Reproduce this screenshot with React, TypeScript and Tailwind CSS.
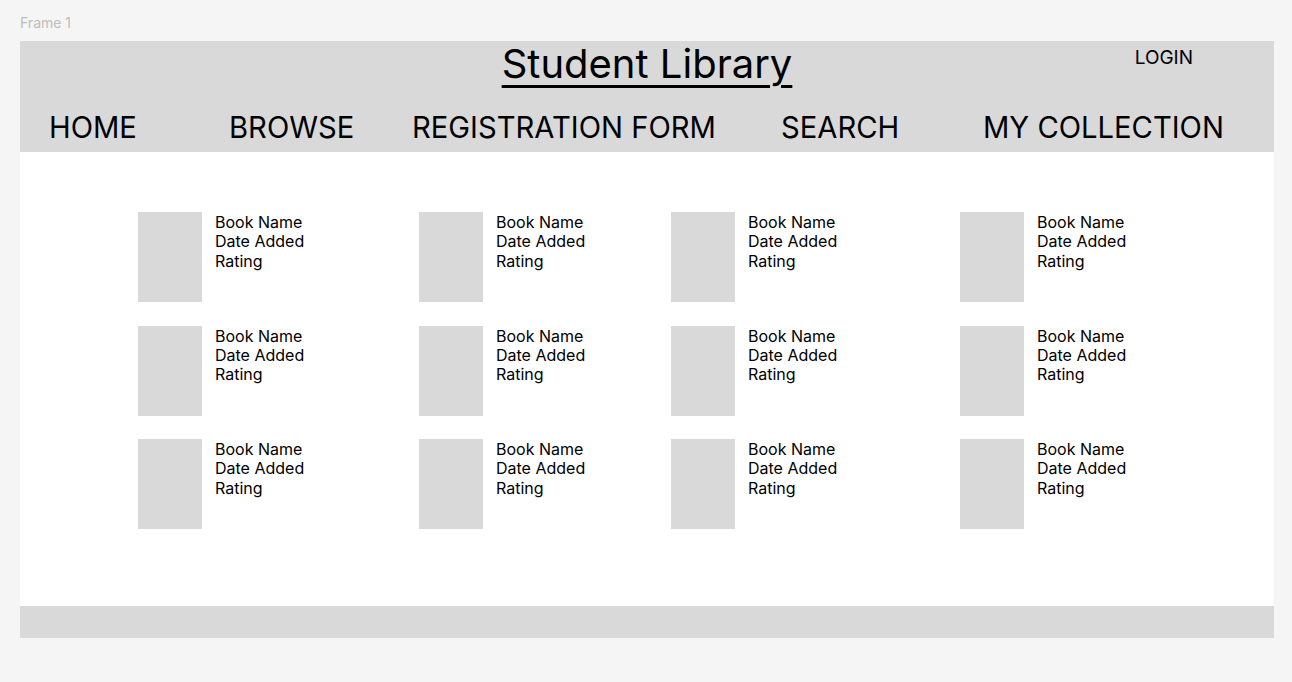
const navItems = [
  { label: "HOME", width: "w-[180px]" },
  { label: "BROWSE", width: "w-[183px]" },
  { label: "REGISTRATION FORM", width: "w-[369px]" },
  { label: "SEARCH", width: "w-[202px]" },
  { label: "MY COLLECTION", width: "" },
]

const rows = [0, 1, 2]
const cols = [0, 1, 2, 3]

function BookCard() {
  return (
    <div className="flex items-start">
      <div className="h-[90px] w-[64px] bg-[#d9d9d9]" />
      <div className="ml-[13px] mt-px text-[16px] leading-[19.4px] text-black">
        <p>Book Name</p>
        <p>Date Added</p>
        <p>Rating</p>
      </div>
    </div>
  )
}

export default function App() {
  return (
    <div
      className="min-h-[682px] w-full bg-[#f5f5f5] px-5 pt-[14px]"
      style={{ fontFamily: "Inter, 'Noto Sans', sans-serif" }}
    >
      <p className="text-[14px] leading-[17px] text-[#bdbdbd]">Frame 1</p>
      <div className="mt-[10px] w-[1254px] bg-white">
        <header className="h-[111px] bg-[#d9d9d9]">
          <div className="grid grid-cols-[1fr_auto_1fr]">
            <div />
            <h1 className="text-[40px] leading-[46px] font-normal text-black underline decoration-[3px] underline-offset-[7px]">
              Student Library
            </h1>
            <div className="flex justify-end pr-[81px] pt-[6px]">
              <span className="text-[19px] leading-[22px] text-black">LOGIN</span>
            </div>
          </div>
          <nav className="mt-[23px] flex pl-[29px]">
            {navItems.map((item) => (
              <span key={item.label} className={`${item.width} text-[29.2px] leading-[36px] text-black`}>
                {item.label}
              </span>
            ))}
          </nav>
        </header>
        <main className="h-[454px] pl-[118px] pt-[60px]">
          <div className="grid grid-cols-[281px_252px_289px_auto] gap-y-[23.5px]">
            {rows.map((r) => cols.map((c) => <BookCard key={`${r}-${c}`} />))}
          </div>
        </main>
        <footer className="h-[32px] bg-[#d9d9d9]" />
      </div>
    </div>
  )
}
